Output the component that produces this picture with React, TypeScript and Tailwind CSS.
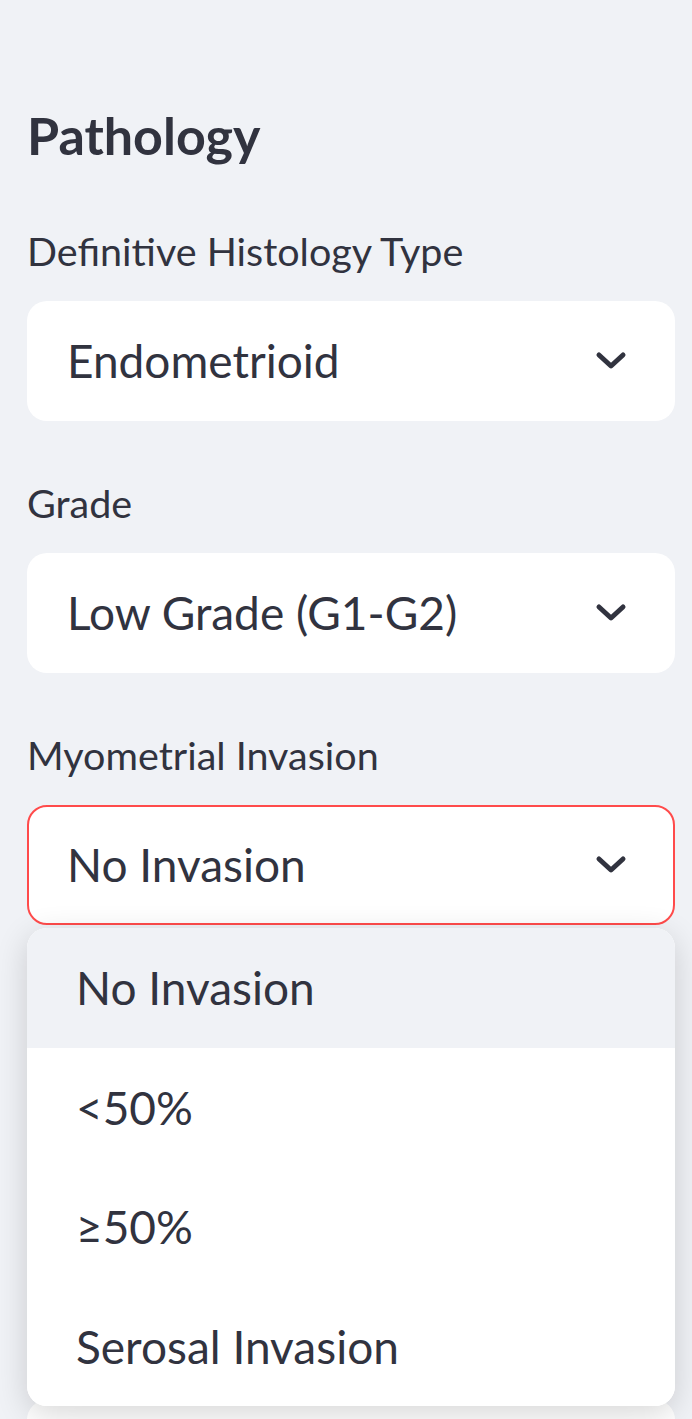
import React from "react";

const font = { fontFamily: "Lato, 'Noto Sans', sans-serif" };

function Chevron() {
  return (
    <svg width="32" height="20" viewBox="0 0 32 20" fill="none" className="shrink-0">
      <polyline
        points="4,4 16,15 28,4"
        stroke="#31333f"
        strokeWidth="5"
        strokeLinecap="round"
        strokeLinejoin="round"
      />
    </svg>
  );
}

function Select({ value, open }: { value: string; open?: boolean }) {
  return (
    <div
      className={`flex h-[120px] items-center justify-between rounded-[20px] bg-white pl-[38px] pr-[46px] ${
        open ? "border-[2.5px] border-[#ff4b4b]" : "border-[2.5px] border-transparent"
      }`}
    >
      <span className="text-[46px] leading-none text-[#31333f]">{value}</span>
      <Chevron />
    </div>
  );
}

function Field({ label, value, open }: { label: string; value: string; open?: boolean }) {
  return (
    <div className="flex flex-col">
      <div className="flex h-[50px] items-center text-[39.5px] text-[#31333f]">{label}</div>
      <div className="mt-[25px]">
        <Select value={value} open={open} />
      </div>
    </div>
  );
}

const options = ["No Invasion", "<50%", "≥50%", "Serosal Invasion"];

export default function App() {
  return (
    <div className="h-[1419px] overflow-hidden bg-[#f0f2f6] pl-[27px] pr-[17px]" style={font}>
      <div className="pt-[105px]">
        <h3 className="text-[52px] font-bold leading-[60px] text-[#31333f]">Pathology</h3>
      </div>
      <div className="mt-[61px] flex flex-col gap-[57px]">
        <Field label="Definitive Histology Type" value="Endometrioid" />
        <Field label="Grade" value="Low Grade (G1-G2)" />
        <div className="relative">
          <Field label="Myometrial Invasion" value="No Invasion" open />
          <div className="absolute left-0 right-0 top-full z-10 mt-[3px] overflow-hidden rounded-[20px] bg-white shadow-[0_8px_32px_rgba(0,0,0,0.16)]">
            {options.map((o, i) => (
              <div
                key={o}
                className={`flex h-[119.5px] items-center pl-[49px] text-[46px] text-[#31333f] ${
                  i === 0 ? "bg-[#f0f2f6]" : "bg-white"
                }`}
              >
                {o}
              </div>
            ))}
          </div>
        </div>
      </div>
      <div className="mt-[475px] h-[120px] rounded-[20px] bg-white" />
    </div>
  );
}
